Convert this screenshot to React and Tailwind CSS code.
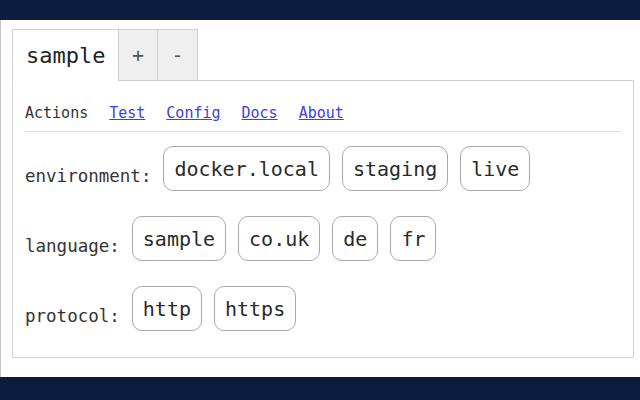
import React from "react";

const mono = { fontFamily: '"DejaVu Sans Mono", monospace' };

function Chip({ children }) {
  return (
    <div className="h-[45px] px-[10px] flex items-center border border-[#a9a9a9] rounded-[10px] text-[20px] text-[#2a2a2a] bg-white">
      {children}
    </div>
  );
}

function Row({ label, items }) {
  return (
    <div className="flex items-end gap-[12px]">
      <div className="text-[17.5px] leading-none mb-[6px] text-[#333]">{label}</div>
      {items.map((t) => (
        <Chip key={t}>{t}</Chip>
      ))}
    </div>
  );
}

export default function App() {
  return (
    <div className="w-[640px] h-[400px] bg-[#0c1c3e] flex flex-col" style={mono}>
      <div className="h-[20px] shrink-0" />
      <div className="h-[357px] shrink-0 bg-white border-l border-[#c4c4c4] pl-[11px] pr-[6px] pt-[9px]">
        <div className="flex h-[52px]">
          <div className="w-[106px] border-l border-t border-[#cfcfcf] flex items-center pl-[13px] text-[22px] text-[#222]">
            sample
          </div>
          <div className="w-[40px] border border-[#cfcfcf] bg-[#efefef] flex items-center justify-center text-[20px] text-[#555]">
            +
          </div>
          <div className="w-[40px] border border-l-0 border-[#cfcfcf] bg-[#efefef] flex items-center justify-center text-[20px] text-[#555]">
            -
          </div>
          <div className="flex-1 border-b border-[#cfcfcf]" />
        </div>
        <div className="h-[277px] border-l border-r border-b border-[#d3d3d3] px-[12px] pt-[22px]">
          <div className="flex items-center gap-[21px] h-[20px] text-[15px] leading-[20px]">
            <span className="text-[#333]">Actions</span>
            <a className="text-[#4040e0] underline" href="#">Test</a>
            <a className="text-[#4040e0] underline" href="#">Config</a>
            <a className="text-[#4040e0] underline" href="#">Docs</a>
            <a className="text-[#4040e0] underline" href="#">About</a>
          </div>
          <div className="mt-[8px] border-t border-[#dcdcdc]" />
          <div className="mt-[14px] flex flex-col gap-[25px]">
            <Row label="environment:" items={["docker.local", "staging", "live"]} />
            <Row label="language:" items={["sample", "co.uk", "de", "fr"]} />
            <Row label="protocol:" items={["http", "https"]} />
          </div>
        </div>
      </div>
    </div>
  );
}
